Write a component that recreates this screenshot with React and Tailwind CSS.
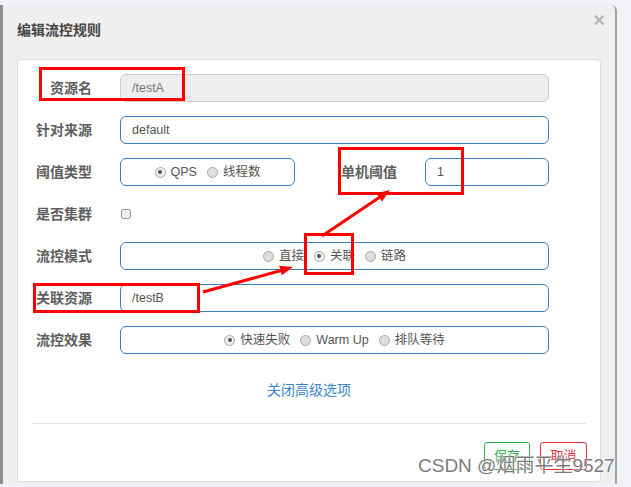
import React from 'react';

function Radio({ checked, label }) {
    return (
        <span className="flex items-center gap-[5px]">
            <span
                className={`w-[11px] h-[11px] rounded-full border border-[#a9a9a9] flex items-center justify-center ${
                    checked ? 'bg-[#efefef]' : 'bg-[#dedede]'
                }`}
            >
                {checked && <span className="w-[4px] h-[4px] rounded-full bg-[#555]" />}
            </span>
            <span>{label}</span>
        </span>
    );
}

function RadioBox({ items, className }) {
    return (
        <div
            className={`h-[28px] border border-[#3b7fc1] rounded-[6px] flex items-center justify-center gap-[10px] text-[12.5px] text-[#555] ${className}`}
        >
            {items.map(([label, checked]) => (
                <Radio key={label} label={label} checked={checked} />
            ))}
        </div>
    );
}

function Label({ children, className = 'w-[74px]' }) {
    return <div className={`${className} text-right text-[14px] font-semibold text-[#5e5e5e]`}>{children}</div>;
}

function TextInput({ value, className = 'w-[429px]' }) {
    return (
        <div
            className={`h-[28px] border border-[#3b7fc1] rounded-[6px] flex items-center px-[11px] text-[12.5px] text-[#555] ${className}`}
        >
            {value}
        </div>
    );
}

export default function App() {
    return (
        <div className="w-[631px] h-[487px] bg-[#f1f2f7] overflow-hidden relative font-['Liberation_Sans','Noto_Sans_CJK_SC',sans-serif]">
            <div className="mt-[5px] w-[617px] h-[479px] bg-[#efefef] border-l-[3px] border-l-[#8d8d8d] border-r-2 border-r-[#a3a3a3] rounded-tr-[6px] px-[14px]">
                <div className="h-[54px] flex justify-between">
                    <span className="self-center -mt-[4px] text-[14px] font-semibold text-[#444]">编辑流控规则</span>
                    <span className="mt-[5px] -mr-[4px] text-[20px] leading-[20px] font-bold text-[#b5b5b5]">×</span>
                </div>

                <div className="h-[423px] bg-white border border-[#dcdcdc] rounded-[4px]">
                    <div className="pt-[14px] flex flex-col gap-[14px]">
                        <div className="flex items-center h-[28px]">
                            <Label>资源名</Label>
                            <div className="ml-[28px] w-[429px] h-[28px] bg-[#eeeeee] border border-[#cccccc] rounded-[6px] flex items-center px-[11px] text-[12.5px] text-[#777]">
                                /testA
                            </div>
                        </div>

                        <div className="flex items-center h-[28px]">
                            <Label>针对来源</Label>
                            <TextInput value="default" className="ml-[28px] w-[429px]" />
                        </div>

                        <div className="flex items-center h-[28px]">
                            <Label>阈值类型</Label>
                            <RadioBox
                                className="ml-[28px] w-[175px]"
                                items={[
                                    ['QPS', true],
                                    ['线程数', false],
                                ]}
                            />
                            <Label className="w-[102px]">单机阈值</Label>
                            <TextInput value="1" className="ml-[28px] w-[124px]" />
                        </div>

                        <div className="flex items-center h-[28px]">
                            <Label>是否集群</Label>
                            <span className="ml-[29px] w-[10px] h-[10px] rounded-[2px] border border-[#9a9a9a] bg-[#eeeeee]" />
                        </div>

                        <div className="flex items-center h-[28px]">
                            <Label>流控模式</Label>
                            <RadioBox
                                className="ml-[28px] w-[429px]"
                                items={[
                                    ['直接', false],
                                    ['关联', true],
                                    ['链路', false],
                                ]}
                            />
                        </div>

                        <div className="flex items-center h-[28px]">
                            <Label>关联资源</Label>
                            <TextInput value="/testB" className="ml-[28px] w-[429px]" />
                        </div>

                        <div className="flex items-center h-[28px]">
                            <Label>流控效果</Label>
                            <RadioBox
                                className="ml-[28px] w-[429px]"
                                items={[
                                    ['快速失败', true],
                                    ['Warm Up', false],
                                    ['排队等待', false],
                                ]}
                            />
                        </div>
                    </div>

                    <div className="mt-[24px] h-[24px] flex items-center justify-center text-[14px] text-[#3a86c8]">
                        关闭高级选项
                    </div>

                    <div className="mt-[21px] mx-[14px] border-t border-[#e3e3e3]" />

                    <div className="mt-[18px] pr-[13px] flex justify-end gap-[10px]">
                        <button className="w-[46px] h-[28px] border border-[#2fae4a] rounded-[3px] text-[13px] text-[#2fae4a]">
                            保存
                        </button>
                        <button className="w-[47px] h-[28px] border border-[#e2303f] rounded-[3px] text-[13px] text-[#e2303f]">
                            取消
                        </button>
                    </div>
                </div>
            </div>

            {/* annotations */}
            <div className="absolute left-[39px] top-[67px] w-[146px] h-[34px] border-[3px] border-[#ff0000]" />
            <div className="absolute left-[338px] top-[147px] w-[126px] h-[48px] border-[3px] border-[#ff0000]" />
            <div className="absolute left-[304px] top-[233px] w-[50px] h-[42px] border-[3px] border-[#ff0000]" />
            <div className="absolute left-[33px] top-[283px] w-[167px] h-[30px] border-[3px] border-[#ff0000]" />
            <svg className="absolute left-0 top-0 pointer-events-none" width="631" height="487">
                <line x1="322" y1="236" x2="380" y2="197" stroke="#ff0000" strokeWidth="3" />
                <polygon points="390,190 382,201.4 376.4,193.2" fill="#ff0000" />
                <line x1="203" y1="292" x2="281" y2="270.5" stroke="#ff0000" strokeWidth="3" />
                <polygon points="293,267 281.8,275.3 279.2,265.7" fill="#ff0000" />
            </svg>

            <div className="absolute left-[418px] top-[455px] text-[19px] leading-[22px] text-[#7c7c7c] [text-shadow:0_0_2px_#fff,0_0_1px_#fff] whitespace-nowrap">
                CSDN @烟雨平生9527
            </div>
        </div>
    );
}
